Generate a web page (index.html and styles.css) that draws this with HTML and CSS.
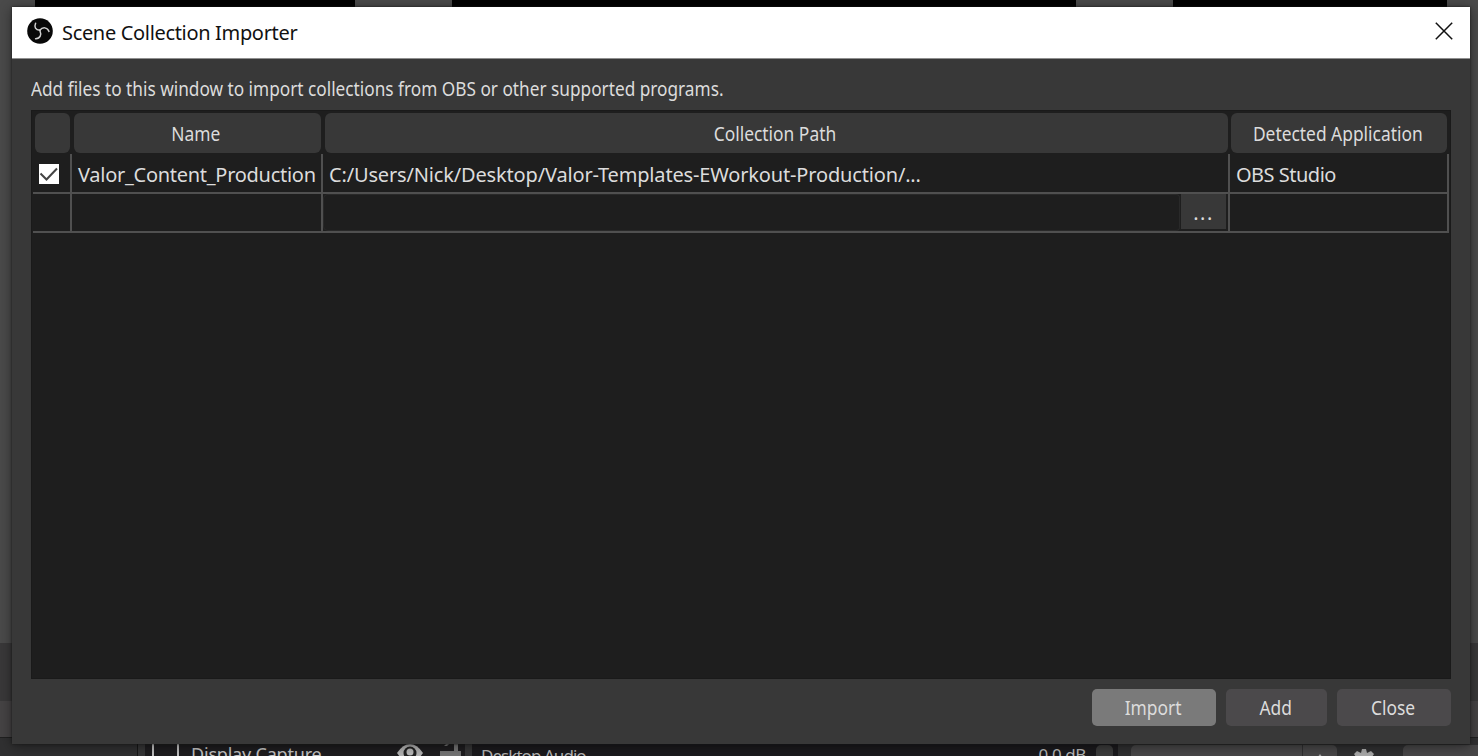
FILE: index.html
```html
<!DOCTYPE html>
<html lang="en">
<head>
<meta charset="utf-8">
<title>Scene Collection Importer</title>
<link rel="stylesheet" href="styles.css">
</head>
<body>
<div class="app">
  <div class="previews"><div class="screen"></div><div class="screen"></div><div class="screen"></div></div>
  <div class="bands"></div>
  <div class="docks">
    <div class="dock-scenes"></div>
    <div class="dock-sources">
      <span class="source-box"></span>
      <span class="t-source">Display Capture</span>
      <svg class="eye" width="28" height="20" viewBox="0 0 28 20"><path d="M1 10Q7 1 14 1t13 9q-6 9-13 9T1 10z" fill="#b5b5b5"/><circle cx="14" cy="10" r="6.5" fill="#222"/><circle cx="14" cy="9" r="3.5" fill="#bbb"/></svg>
      <svg class="lock" width="22" height="20" viewBox="0 0 22 20"><path d="M0 8h21v12H0zM14 9V1h4v8zM4 3l3-3h3L7 3z" fill="#757575"/></svg>
    </div>
    <div class="dock-mixer"><span class="t-mixer">Desktop Audio</span><span class="t-db">0.0 dB</span><span class="scroll"></span></div>
    <div class="dock-controls">
      <span class="field"></span>
      <span class="spin"><svg width="12" height="8" viewBox="0 0 12 8"><path d="M6 0l6 8H0z" fill="#aaa"/></svg></span>
      <svg class="gear" width="26" height="22" viewBox="0 0 26 22"><path d="M11 1h4l1 4 4-2 3 3-2 3 4 2v4H1v-4l4-2-2-3 3-3 4 2z" fill="#aaa"/></svg>
      <span class="control"></span>
    </div>
  </div>
</div>

<main class="dialog">
  <header class="titlebar">
    <svg class="logo" width="26" height="26" viewBox="0 0 26 26">
      <circle cx="13" cy="13" r="12.8" fill="#080808"/>
      <g fill="none" stroke="#d0d0d0" stroke-width="1.5" stroke-linecap="round">
        <path d="M12.8 12.2C8.5 12 7 9 8.6 5.2"/>
        <path d="M12.8 12.2C15.5 8.8 20.5 9 22 13.4"/>
        <path d="M12.8 12.2C14.8 17 13.3 20.5 8.6 20.8"/>
      </g>
    </svg>
    <h1 class="title"><span class="t-title">Scene Collection Importer</span></h1>
    <svg class="close" width="18" height="18" viewBox="0 0 18 18"><path d="M.8.8l16.4 16.4M17.2.8L.8 17.2" stroke="#111" stroke-width="1.5"/></svg>
  </header>
  <p class="intro"><span class="t-intro">Add files to this window to import collections from OBS or other supported programs.</span></p>
  <section class="table">
    <div class="row head">
      <div></div>
      <div><span class="narrow">Name</span></div>
      <div><span class="narrow">Collection Path</span></div>
      <div><span class="narrow">Detected Application</span></div>
    </div>
    <div class="row body">
      <div class="check-cell"><svg class="check" width="20" height="20" viewBox="0 0 20 20"><path d="M0 0h20v20H0z" fill="#fff"/><path d="M1.5 9.5l6 6L18 4.5" fill="none" stroke="#444" stroke-width="2"/></svg></div>
      <div><span class="t-valor">Valor_Content_Production</span></div>
      <div><span class="t-file">C:/Users/Nick/Desktop/Valor-Templates-EWorkout-Production/...</span></div>
      <div><span class="t-obs">OBS Studio</span></div>
    </div>
    <div class="row body second">
      <div></div><div></div>
      <div class="picker"><span class="input"></span><button class="browse">...</button></div>
      <div></div>
    </div>
  </section>
  <footer class="actions">
    <button class="btn primary"><span class="narrow">Import</span></button>
    <button class="btn add"><span class="narrow">Add</span></button>
    <button class="btn shut"><span class="narrow">Close</span></button>
  </footer>
</main>
</body>
</html>
```
FILE: styles.css
```css
* { box-sizing: border-box; }
body { margin: 0; width: 1478px; height: 756px; overflow: hidden; position: relative; background: #4a4a4a; color: #dcdcdc; font: 19px/24px "Noto Sans", "Open Sans", sans-serif; white-space: nowrap; }
span { white-space: nowrap; }
button { border: 0; padding: 0; font: inherit; color: inherit; }

.app { width: 1478px; height: 756px; display: flex; flex-direction: column; }
.previews { height: 40px; padding: 0 31px 0 35px; display: flex; justify-content: space-between; background: #4a4a4a; }
.screen { background: #000; width: 320px; }
.screen:nth-child(2) { width: 624px; }
.screen:nth-child(3) { width: 274px; }
.bands { height: 698px; background: linear-gradient(#4a4a4a 603px, #393839 603px 661px, #454344 661px 697px, #202020 697px); }
.docks { height: 18px; display: flex; background: #303031; }
.dock-scenes { width: 138px; border-right: 1px solid #171717; }
.dock-sources { width: 334px; display: flex; background: #1e1d1f; border-left: 7px solid #363637; border-right: 7px solid #363637; padding-left: 7px; }
.source-box { width: 27px; height: 24px; border: solid #c2c2c2; border-width: 0 2px; flex: none; }
.t-source { margin: 4px 0 0 12px; width: 206px; flex: none; font-size: 18px; color: #c5c5c5; letter-spacing: -.2px; }
.eye { margin: 5px 0 0 -1px; flex: none; }
.lock { margin: 5px 0 0 16px; flex: none; }
.dock-mixer { width: 646px; display: flex; justify-content: flex-end; background: #1b1a1d; font-size: 17px; color: #b8b8b8; padding-right: 5px; }
.t-mixer { margin: 6px auto 0 9px; letter-spacing: -.95px; }
.t-db { margin: 5px 10px 0 0; letter-spacing: -.4px; }
.scroll { width: 17px; height: 30px; margin-top: 7px; border-radius: 5px; background: #3c3c3c; }
.dock-controls { flex: 1; display: flex; background: #303031; padding-left: 13px; }
.field, .spin, .control { margin-top: 7px; height: 30px; background: #484748; }
.field { width: 171px; border-radius: 5px 0 0 0; }
.spin { width: 34px; margin-left: 1px; border-radius: 0 5px 0 0; }
.spin svg { display: block; margin: 9px auto 0; }
.gear { margin: 10px 0 0 14px; }
.control { flex: 1; margin-left: 26px; border-radius: 5px 0 0 0; }

.dialog { position: absolute; left: 12px; top: 7px; width: 1458px; height: 737px; display: flex; flex-direction: column; background: #383838; box-shadow: 0 0 2px #171717, 0 2px 12px rgba(0, 0, 0, .45); }
.titlebar { height: 52px; flex: none; background: #fff; border-bottom: 1px solid #8f8f8f; display: flex; align-items: center; padding: 0 17px 3px 15px; }
.title { margin: 3px auto 0 9px; font: 20px/26px "Noto Sans", sans-serif; color: #111; }
.intro { height: 51px; flex: none; margin: 0; padding: 18px 0 0 19px; font-size: 19px; }
.table { width: 1420px; height: 569px; flex: none; margin-left: 19px; padding: 2px 3px 0 1px; background: #1e1e1e; border: 1px solid #1a1a1a; }
.row { display: grid; grid-template-columns: 39px 251px 907px 219px; }
.head { height: 41px; }
.head > div { height: 40px; padding: 2px 3px 0 0; margin: 0 2px; border-radius: 6px; background: #383838; display: flex; align-items: center; justify-content: center; }
.head > div:nth-child(4) { margin-left: 1px; }
.body > div { height: 40px; border: solid #505050; border-width: 0 2px 2px 0; padding-left: 6px; display: flex; align-items: center; font-size: 20px; }
.body > div > span { position: relative; top: 2px; }
.second > div { height: 39px; }
.body .check-cell { padding: 2px 0 0 6px; }
.body .picker { padding: 0 2px 0 0; align-items: flex-start; }
.body .picker .input { position: static; }
.input { flex: 1; height: 37px; border-radius: 5px 4px 4px 5px; background: #1e1e1e; box-shadow: inset 0 0 0 1px #292929; }
.browse { width: 45px; height: 35px; background: #383838; font-size: 20px; line-height: 37px; letter-spacing: 1.5px; margin-left: 1px; }
.actions { display: flex; justify-content: flex-end; gap: 10px; padding: 10px 19px 0; }
.btn { height: 37px; border-radius: 5px; background: #4b494b; display: flex; align-items: center; justify-content: center; font-size: 19px; padding-right: 1px; }
.primary { width: 124px; background: #7a7a7a; }
.add { width: 101px; }
.shut { width: 114px; }

.t-title { letter-spacing: -.33px; }
.t-intro { display: inline-block; transform: scaleX(.907); transform-origin: left; }
.narrow { transform: scaleX(.915); }
.t-valor { letter-spacing: -.28px; }
.t-file { letter-spacing: -.16px; }
.t-obs { letter-spacing: -.5px; }
```
